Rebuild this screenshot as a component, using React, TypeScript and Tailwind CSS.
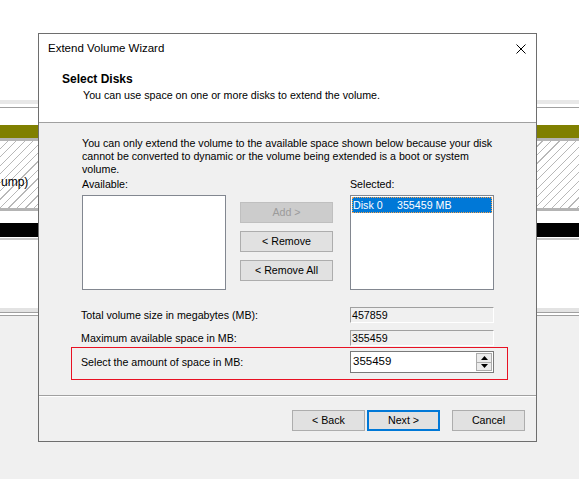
import React from 'react';

type BtnProps = {
  label: string;
  disabled?: boolean;
  primary?: boolean;
  className?: string;
};

const Btn: React.FC<BtnProps> = ({ label, disabled, primary, className = '' }) => {
  let look = 'border border-[#adadad] bg-[#e1e1e1] text-black';
  if (disabled) look = 'border border-[#bfbfbf] bg-[#cccccc] text-[#9b9b9b]';
  if (primary) look = 'border-2 border-[#0078d7] bg-[#e1e1e1] text-black';
  return (
    <div className={`flex h-[21px] items-center justify-center leading-none ${look} ${className}`}>
      {label}
    </div>
  );
};

const ReadOnlyField: React.FC<{ value: string }> = ({ value }) => (
  <div className="flex h-[16px] w-[144px] items-center border-t border-l border-[#a0a0a0] border-r-white border-b-white border-r border-b bg-[#f0f0f0] pl-[1px] leading-none">
    {value}
  </div>
);

const Arrow: React.FC<{ down?: boolean }> = ({ down }) => (
  <svg width="7" height="4" viewBox="0 0 7 4">
    {down ? <polygon points="0,0 7,0 3.5,4" fill="#000" /> : <polygon points="0,4 7,4 3.5,0" fill="#000" />}
  </svg>
);

const App: React.FC = () => {
  return (
    <div className="relative flex h-[479px] w-[579px] flex-col overflow-hidden bg-[#f0f0f0] font-['Liberation_Sans',Arial,sans-serif] text-[10.67px] text-black">
      {/* disk management window behind the wizard */}
      <div className="h-[100px] bg-white" />
      <div className="h-[4px] bg-[#e8e8e8]" />
      <div className="h-[3px] bg-white" />
      <div className="h-px bg-[#a0a0a0]" />
      <div className="h-[17px] bg-white" />
      <div className="h-[13px] bg-[#808000]" />
      <div className="h-[3px] bg-[#b4b4b4]" />
      <div className="h-[67px] bg-[repeating-linear-gradient(135deg,white_0px,white_5px,#b8b8b8_5px,#b8b8b8_6px)] pt-[34px] pl-[1px] text-[12px] leading-[14px]">
        ump)
      </div>
      <div className="h-[3px] bg-[#b4b4b4]" />
      <div className="h-[12px] bg-white" />
      <div className="h-[14px] bg-black" />
      <div className="h-px bg-white" />
      <div className="h-[2px] bg-[#c8c8c8]" />
      <div className="h-[68px] bg-white" />
      <div className="h-[4px] bg-[#e3e3e3]" />
      <div className="h-px bg-[#a0a0a0]" />
      <div className="h-[2px] bg-white" />
      <div className="h-px bg-[#a0a0a0]" />
      <div className="flex-1" />

      {/* wizard window */}
      <div className="absolute top-[33px] left-[38px] flex h-[409px] w-[499px] flex-col border border-[#6e6e6e] bg-white">
        <div className="flex h-[29px] items-center justify-between pr-[10px] pl-[9px]">
          <span className="text-[11.5px] leading-none">Extend Volume Wizard</span>
          <svg width="10" height="10" viewBox="0 0 10 10">
            <path d="M0.5 0.5 L9.5 9.5 M9.5 0.5 L0.5 9.5" stroke="#000" strokeWidth="1" />
          </svg>
        </div>
        <div className="h-[59px] pt-[9px]">
          <div className="pl-[23px] text-[12px] leading-[15px] font-bold">Select Disks</div>
          <div className="mt-[2px] pl-[44px] leading-[13px]">
            You can use space on one or more disks to extend the volume.
          </div>
        </div>
        <div className="h-px bg-[#a0a0a0]" />

        <div className="flex flex-1 flex-col bg-[#f0f0f0] pt-[14px] pr-[42px] pl-[43px]">
          <p className="leading-[13px] whitespace-nowrap">
            You can only extend the volume to the available space shown below because your disk
            <br />
            cannot be converted to dynamic or the volume being extended is a boot or system
            <br />
            volume.
          </p>

          <div className="mt-[1px] flex">
            <div className="w-[144px]">
              <div className="h-[18px] leading-[14px]">Available:</div>
              <div className="h-[95px] border border-[#828790] bg-white" />
            </div>
            <div className="ml-[14px] flex w-[93px] flex-col gap-[8px] pt-[25px]">
              <Btn label="Add >" disabled />
              <Btn label="< Remove" />
              <Btn label="< Remove All" />
            </div>
            <div className="ml-[17px] w-[144px]">
              <div className="h-[18px] leading-[14px]">Selected:</div>
              <div className="h-[95px] border border-[#828790] bg-white p-px">
                <div className="flex h-[16px] items-center border border-dotted border-[#f7a24a] bg-[#0078d7] leading-none text-white">
                  <span className="w-[44px]">Disk 0</span>
                  <span>355459 MB</span>
                </div>
              </div>
            </div>
          </div>

          <div className="mt-[17px] flex h-[16px] items-center justify-between">
            <span className="-ml-px">Total volume size in megabytes (MB):</span>
            <ReadOnlyField value="457859" />
          </div>
          <div className="mt-[7px] flex h-[16px] items-center justify-between">
            <span className="-ml-px">Maximum available space in MB:</span>
            <ReadOnlyField value="355459" />
          </div>
          {/* red highlight frame around the amount row */}
          <div className="mt-px -mr-[14px] -ml-[11px] border border-[#e81123] pt-[3px] pr-[13px] pb-[6px] pl-[10px]">
            <div className="flex h-[22px] items-center justify-between">
              <span className="-ml-px">Select the amount of space in MB:</span>
              <div className="flex h-[22px] w-[144px] border border-[#7a7a7a] bg-white">
                <div className="flex flex-1 items-center pl-[2px] text-[11.5px] leading-none">355459</div>
                <div className="flex w-[17px] flex-col py-px pr-px">
                  <div className="flex flex-1 items-center justify-center border border-[#acacac] bg-[#ececec]">
                    <Arrow />
                  </div>
                  <div className="flex flex-1 items-center justify-center border border-t-0 border-[#acacac] bg-[#ececec]">
                    <Arrow down />
                  </div>
                </div>
              </div>
            </div>
          </div>
        </div>

        <div className="h-px bg-[#a0a0a0]" />
        <div className="h-px bg-white" />
        <div className="flex h-[44px] justify-end bg-[#f0f0f0] pt-[13px] pr-[11px]">
          <Btn label="< Back" className="w-[73px]" />
          <Btn label="Next >" primary className="ml-[2px] w-[73px]" />
          <Btn label="Cancel" className="ml-[12px] w-[73px]" />
        </div>
      </div>
    </div>
  );
};

export default App;
